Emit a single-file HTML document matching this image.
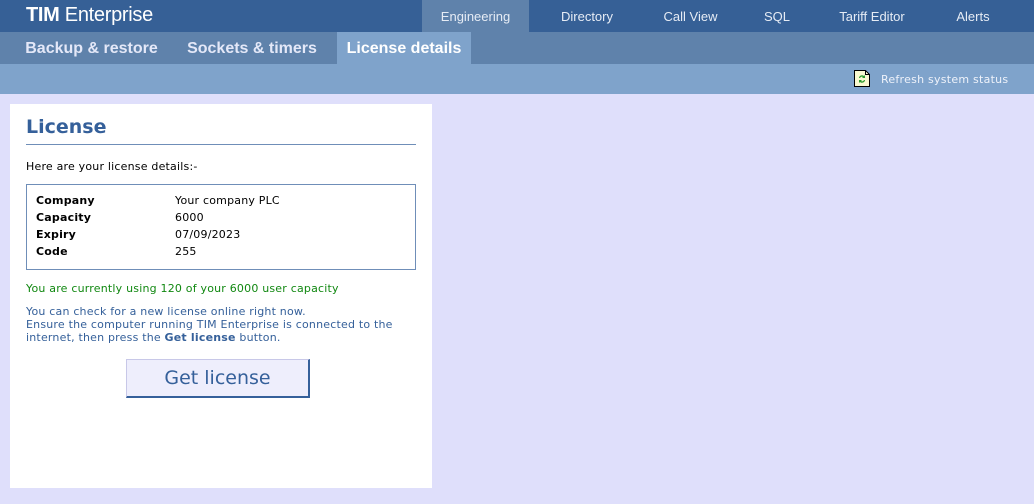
<!DOCTYPE html>
<html><head><style>
*{margin:0;padding:0;box-sizing:border-box}
body{width:1034px;height:504px;background:#dfdffb;font-family:"DejaVu Sans","Liberation Sans",sans-serif;position:relative;overflow:hidden}
.top{position:absolute;left:0;top:0;width:1034px;height:32px;background:#366096}
.logo{position:absolute;left:26px;top:4px;color:#fff;font-family:"Liberation Sans",sans-serif;font-size:20px;letter-spacing:-0.3px}
.nav{position:absolute;top:1px;height:32px;line-height:32px;color:#e6ecf5;font-family:"Liberation Sans",sans-serif;font-size:13px;text-align:center}
.sub{position:absolute;left:0;top:32px;width:1034px;height:32px;background:#5f82ab}
.st{position:absolute;top:32px;height:32px;line-height:33px;color:#e4e8f8;font-family:"Liberation Sans",sans-serif;font-weight:bold;font-size:16px;text-align:center}
.bar3{position:absolute;left:0;top:64px;width:1034px;height:30px;background:#7fa3cb}
.panel{position:absolute;left:10px;top:104px;width:422px;height:384px;background:#fff}
.t{position:absolute;font-size:11px;letter-spacing:0.2px;white-space:nowrap}
</style></head><body>
<div class="top"></div>
<div class="logo"><b>TIM</b> Enterprise</div>
<div class="nav" style="left:422px;top:0;width:107px;background:#5f82ab;line-height:33px">Engineering</div>
<div class="nav" style="left:543px;width:88px">Directory</div>
<div class="nav" style="left:648px;width:85px">Call View</div>
<div class="nav" style="left:752px;width:50px">SQL</div>
<div class="nav" style="left:822px;width:100px">Tariff Editor</div>
<div class="nav" style="left:942px;width:62px">Alerts</div>
<div class="sub"></div>
<div class="st" style="left:14px;width:155px">Backup &amp; restore</div>
<div class="st" style="left:178px;width:148px">Sockets &amp; timers</div>
<div class="st" style="left:337px;width:134px;background:#7fa3cb;color:#fff">License details</div>
<div class="bar3"></div>
<svg style="position:absolute;left:853px;top:69px" width="18" height="19" viewBox="0 0 18 19"><path d="M1.5 1.5h11l4 4v12h-15z" fill="#fafad0" stroke="#000"/><path d="M12.5 1.5v4h4" fill="none" stroke="#000"/><path d="M6 9a3 3 0 0 1 5-2l1-1v3h-3l1-1a2 2 0 0 0-3 1zM12 11a3 3 0 0 1-5 2l-1 1v-3h3l-1 1a2 2 0 0 0 3-1z" fill="#2a9a2a"/></svg>
<div class="t" style="left:881px;top:73px;color:#eef2fa;letter-spacing:0.25px">Refresh system status</div>
<div class="panel"></div>
<div class="t" style="left:26px;top:116px;font-weight:bold;font-size:19px;letter-spacing:0;color:#35609a">License</div>
<div style="position:absolute;left:26px;top:144px;width:390px;height:1px;background:#6f8eb8"></div>
<div class="t" style="left:26px;top:160px;color:#000">Here are your license details:-</div>
<div style="position:absolute;left:26px;top:184px;width:390px;height:86px;border:1px solid #6f8eb8"></div>
<div class="t" style="left:36px;top:192px;line-height:17px;font-weight:bold;color:#000">Company<br>Capacity<br>Expiry<br>Code</div>
<div class="t" style="left:175px;top:192px;line-height:17px;color:#000">Your company PLC<br>6000<br>07/09/2023<br>255</div>
<div class="t" style="left:26px;top:282px;color:#118811">You are currently using 120 of your 6000 user capacity</div>
<div class="t" style="left:26px;top:305px;line-height:13px;color:#35609a">You can check for a new license online right now.<br>Ensure the computer running TIM Enterprise is connected to the<br>internet, then press the <b>Get license</b> button.</div>
<div style="position:absolute;left:126px;top:359px;width:184px;height:39px;background:#eeeefc;border:1px solid #c8c8e8;border-right:2px solid #35609a;border-bottom:2px solid #35609a;color:#35609a;font-family:'DejaVu Sans',sans-serif;font-size:19px;text-align:center;line-height:37px">Get license</div>
</body></html>
